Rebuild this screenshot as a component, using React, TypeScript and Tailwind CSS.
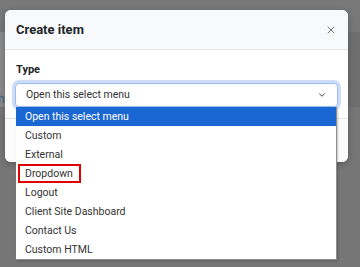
import { X, ChevronDown } from 'lucide-react'

const options = [
  'Open this select menu',
  'Custom',
  'External',
  'Dropdown',
  'Logout',
  'Client Site Dashboard',
  'Contact Us',
  'Custom HTML',
]

const App = () => {
  return (
    <div
      className="relative w-[360px] h-[267px] overflow-hidden bg-[#767676]"
      style={{ fontFamily: 'Roboto, "Noto Sans", sans-serif' }}
    >
      {/* dimmed page behind the backdrop */}
      <div className="flex flex-col">
        <div className="h-[32px] bg-[#787878]" />
        <div className="h-[75px] flex bg-[#6f6f6f]">
          <div className="w-[6px] bg-[#8a8a8a] flex items-end pb-[2px] overflow-hidden">
            <span className="text-[12px] leading-none text-[#3e6685] -ml-[2px]">h</span>
          </div>
        </div>
        <div className="flex-1 bg-[#777777]" />
      </div>

      {/* modal */}
      <div className="absolute left-[5px] top-[10px] w-[343px] h-[152px] rounded-[6px] bg-white overflow-hidden shadow-[0_2px_6px_rgba(0,0,0,0.25)] flex flex-col">
        <div className="h-[40px] bg-[#f8f9fa] border-b border-[#e3e5e8] flex items-center justify-between pl-[11px] pr-[11px]">
          <span className="text-[13px] font-bold text-[#212529]">Create item</span>
          <X className="w-[12px] h-[12px] text-[#555]" strokeWidth={1.6} />
        </div>
        <div className="h-[68px] pt-[12px] px-[10px]">
          <div className="pl-[1px] text-[11px] font-bold text-[#212529] leading-[16px]">Type</div>
          <div className="mt-[5px] h-[24px] rounded-[4px] border border-[#9fbdf0] shadow-[0_0_0_3px_#cfdcf9] bg-white flex items-center justify-between pl-[10px] pr-[10px]">
            <span className="text-[10.5px] text-[#333]">Open this select menu</span>
            <ChevronDown className="w-[10px] h-[10px] text-[#333]" strokeWidth={2.2} />
          </div>
        </div>
        <div className="flex-1 border-t border-[#e3e5e8] bg-[#fbfbfc]" />
      </div>

      {/* native select dropdown */}
      <div className="absolute left-[16px] top-[107px] w-[321px] h-[153px] bg-white border-r border-b border-[#8c8c8c] shadow-[1px_1px_2px_rgba(0,0,0,0.2)] flex flex-col">
        {options.map((opt, i) => (
          <div
            key={i}
            className={`h-[19px] flex items-center pl-[9px] text-[10.5px] ${
              i === 0 ? 'bg-[#1a66d2] text-white' : 'text-[#333]'
            }`}
          >
            {opt === 'Dropdown' ? (
              <span className="-ml-[7px] pl-[5px] pr-[6px] h-[19px] flex items-center border-2 border-[#e00000]">
                {opt}
              </span>
            ) : (
              opt
            )}
          </div>
        ))}
      </div>
    </div>
  )
}

export default App
